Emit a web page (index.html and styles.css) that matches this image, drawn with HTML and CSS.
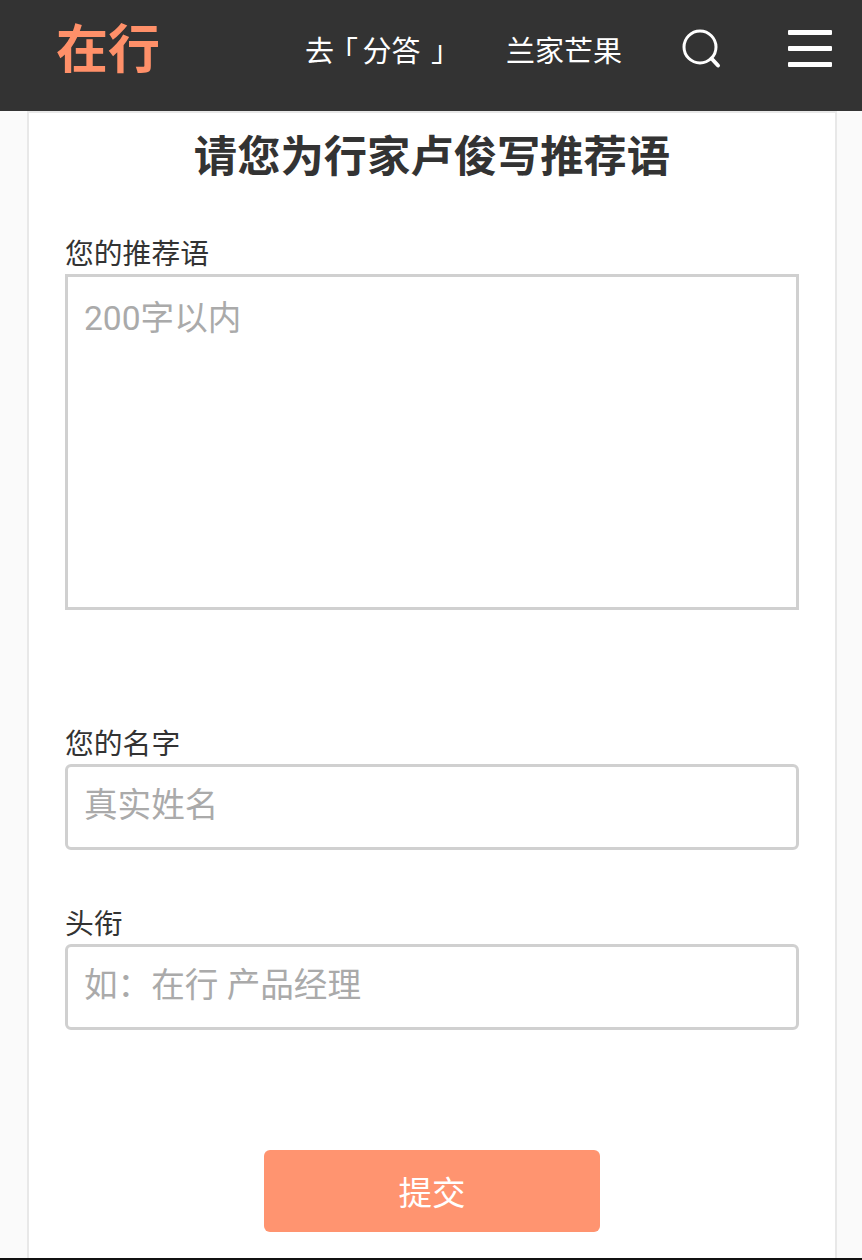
FILE: index.html
```html
<!DOCTYPE html>
<html lang="zh-CN">
<head>
  <meta charset="UTF-8">
  <title>请您为行家卢俊写推荐语</title>
  <link rel="stylesheet" href="styles.css">
</head>
<body>
<header class="topbar">
  <a class="logo">在行</a>
  <nav class="topnav">
    <a>去<span class="open">「</span>分答<span class="close">」</span></a>
    <a>兰家芒果</a>
  </nav>
  <svg class="icon-search" width="44" height="44" viewBox="0 0 44 44" fill="none" stroke="#fff" stroke-linecap="round">
    <circle cx="20" cy="20" r="16" stroke-width="3"/>
    <path d="M31.5 31.5l6.5 7" stroke-width="4"/>
  </svg>
  <div class="icon-menu"><span></span><span></span><span></span></div>
</header>

<main class="card">
  <h1>请您为行家卢俊写推荐语</h1>
  <form>
    <label class="field field-text">
      <span>您的推荐语</span>
      <textarea placeholder="200字以内"></textarea>
    </label>
    <label class="field field-name">
      <span>您的名字</span>
      <input type="text" placeholder="真实姓名">
    </label>
    <label class="field field-title">
      <span>头衔</span>
      <input type="text" placeholder="如：在行 产品经理">
    </label>
    <button type="button" class="submit">提交</button>
  </form>
</main>
</body>
</html>
```

FILE: styles.css
```css
* {
    box-sizing: border-box;
}
html, body {
    height: 1260px;
    overflow: hidden;
}
body {
    margin: 0;
    background-color: #fafafa;
    border-bottom: 2px solid #111;
    color: #333;
    font-family: Roboto, "Noto Sans CJK SC", sans-serif;
}
.topbar {
    display: flex;
    align-items: center;
    height: 111px;
    padding: 0 30px 0 56px;
    background-color: #333;
    color: #fff;
}
.logo {
    flex: none;
    width: 104px;
    color: #ff9069;
    font-size: 52px;
    font-weight: 700;
    line-height: 1;
    white-space: nowrap;
    margin-top: -10px;
}
.topnav {
    display: flex;
    flex: none;
    gap: 56px;
    margin-left: 145px;
    margin-top: -13px;
    font-size: 29px;
    font-weight: 400;
    white-space: nowrap;
}
.topnav .open,
.topnav .close {
    font-feature-settings: "palt";
}
.topnav .open {
    margin: 0 5px 0 9px;
}
.topnav .close {
    margin: 0 4px 0 11px;
}
.icon-search {
    flex: none;
    margin-left: 58px;
    margin-top: -13px;
}
.icon-menu {
    display: flex;
    flex: none;
    flex-direction: column;
    gap: 11px;
    width: 44px;
    margin-left: 64px;
    margin-top: -14px;
}
.icon-menu span {
    height: 5px;
    background-color: #fff;
    border-radius: 1px;
}
.card {
    width: 810px;
    height: 1147px;
    margin-left: 27px;
    padding: 14px 36px 0;
    background-color: #fff;
    border: 2px solid #e8e8e8;
    border-bottom: 0;
}
h1 {
    margin: 0;
    font-family: "Liberation Sans", "Noto Sans CJK SC", sans-serif;
    font-size: 43.3px;
    line-height: 60px;
    font-weight: 700;
    text-align: center;
    color: #333;
}
.field {
    display: block;
}
.field span {
    display: block;
    font-size: 28.8px;
    line-height: 40px;
    font-weight: 400;
    color: #333;
}
.field-text {
    margin-top: 47px;
}
.field-name {
    margin-top: 114px;
}
.field-title {
    margin-top: 54px;
}
textarea, input {
    display: block;
    width: 734px;
    margin: 0;
    padding: 0 16px;
    background-color: #fff;
    border: 3px solid #d0d0d0;
    outline: none;
    font-family: inherit;
    font-size: 33.6px;
    color: #333;
}
textarea {
    height: 336px;
    padding-top: 14px;
    border-radius: 0;
    resize: none;
}
input {
    height: 86px;
    padding-bottom: 3px;
    border-radius: 6px;
}
textarea::placeholder, input::placeholder {
    color: #aaa;
    opacity: 1;
}
.submit {
    display: block;
    width: 336px;
    height: 82px;
    margin: 120px auto 0;
    padding-bottom: 3px;
    background-color: #ff9470;
    border: 0;
    border-radius: 6px;
    color: #fff;
    font-family: inherit;
    font-size: 33.5px;
}
```
